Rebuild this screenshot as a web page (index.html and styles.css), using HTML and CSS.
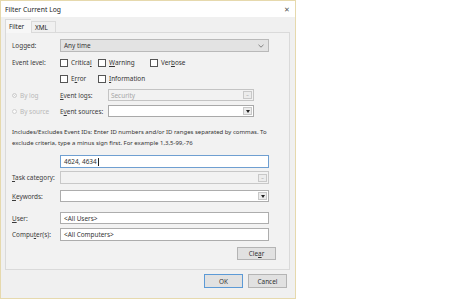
FILE: index.html
```html
<!DOCTYPE html>
<html lang="en">
<head>
    <meta charset="UTF-8">
    <meta name="viewport" content="width=device-width, initial-scale=1.0">
    <title>Filter Current Log</title>
    <link rel="stylesheet" href="styles.css">
</head>
<body>
    <div class="dialog">
        <div class="titlebar">
            <span class="title">Filter Current Log</span>
            <span class="close-btn">&#x2715;</span>
        </div>

        <div class="tabs">
            <span class="tab active">Filter</span>
            <span class="tab">XML</span>
        </div>

        <div class="panel">
            <div class="row row-logged">
                <span class="lbl">Logged:</span>
                <div class="select">
                    <span>Any time</span>
                    <svg class="chevron" width="6" height="4" viewBox="0 0 6 4"><path d="M0.5 0.8 L3 3.2 L5.5 0.8" fill="none" stroke="#777" stroke-width="0.9"/></svg>
                </div>
            </div>

            <div class="row row-level">
                <span class="lbl">Event level:</span>
                <div class="checks">
                    <span class="check"><i class="box"></i>Critica<u>l</u></span>
                    <span class="check"><i class="box"></i><u>W</u>arning</span>
                    <span class="check"><i class="box"></i>Ver<u>b</u>ose</span>
                    <span class="check"><i class="box"></i>E<u>r</u>ror</span>
                    <span class="check"><i class="box"></i><u>I</u>nformation</span>
                </div>
            </div>

            <div class="row row-logs">
                <span class="radio"><i class="dot checked"></i>By log</span>
                <span class="lbl2"><u>E</u>vent logs:</span>
                <div class="combo disabled">
                    <span>Security</span>
                    <span class="drop grey">&#x2013;</span>
                </div>
            </div>

            <div class="row row-sources">
                <span class="radio"><i class="dot"></i>By source</span>
                <span class="lbl2">E<u>v</u>ent sources:</span>
                <div class="combo">
                    <span></span>
                    <span class="drop"><i class="tri"></i></span>
                </div>
            </div>

            <p class="hint">Includes/Excludes Event IDs: Enter ID numbers and/or ID ranges separated by commas. To exclude criteria, type a minus sign first. For example 1,3,5-99,-76</p>

            <div class="row row-ids">
                <span class="lbl"></span>
                <div class="field active">4624, 4634<i class="caret"></i></div>
            </div>

            <div class="row row-task">
                <span class="lbl"><u>T</u>ask category:</span>
                <div class="field disabled">
                    <span></span>
                    <span class="drop grey small">&#x2013;</span>
                </div>
            </div>

            <div class="row row-keys">
                <span class="lbl"><u>K</u>eywords:</span>
                <div class="field">
                    <span></span>
                    <span class="drop"><i class="tri"></i></span>
                </div>
            </div>

            <div class="row row-user">
                <span class="lbl"><u>U</u>ser:</span>
                <div class="field">&lt;All Users&gt;</div>
            </div>

            <div class="row row-comp">
                <span class="lbl">Compu<u>t</u>er(s):</span>
                <div class="field">&lt;All Computers&gt;</div>
            </div>

            <div class="row row-clear">
                <button class="btn">Cle<u>a</u>r</button>
            </div>
        </div>

        <div class="footer">
            <button class="btn btn-default">OK</button>
            <button class="btn">Cancel</button>
        </div>
    </div>
</body>
</html>
```

FILE: styles.css
```css
* {
    box-sizing: border-box;
}

body {
    margin: 0;
    background-color: #fff;
    font-family: "Noto Sans", "Open Sans", sans-serif;
    font-size: 6.4px;
    color: #3a3a3a;
}

u {
    text-decoration-thickness: 0.5px;
    text-underline-offset: 1px;
}

.dialog {
    width: 296px;
    height: 299px;
    background-color: #f0f0f0;
    border: 1px solid #e6d9ad;
    display: flex;
    flex-direction: column;
}

.titlebar {
    height: 16px;
    background-color: #fff;
    display: flex;
    align-items: center;
    justify-content: space-between;
    padding: 0 5px 0 4px;
    color: #222;
    font-size: 6.8px;
}

.close-btn {
    font-size: 7px;
    color: #555;
}

/* Tabs */
.tabs {
    height: 14px;
    margin-top: 1px;
    padding-left: 4px;
    display: flex;
    align-items: flex-end;
}

.tab {
    height: 11px;
    width: 25px;
    padding-left: 3px;
    display: flex;
    align-items: center;
    border: 1px solid #dadada;
    border-bottom: none;
    background-color: #f0f0f0;
    color: #222;
}

.tab.active {
    position: relative;
    height: 14px;
    width: 26px;
    margin-bottom: -1px;
    background-color: #f7f7f7;
    border-right: none;
}

.panel {
    margin: 0 5px 0 4px;
    height: 238px;
    border: 1px solid #dadada;
    background-color: #f2f2f2;
    padding: 0 0 0 6px;
}

.row {
    display: flex;
    align-items: center;
}

.lbl {
    width: 48px;
    flex-shrink: 0;
}

.row-logged {
    margin-top: 6px;
    height: 13px;
}

.select {
    width: 209px;
    height: 13px;
    border: 1px solid #b9b9b9;
    background-color: #e3e3e3;
    display: flex;
    align-items: center;
    justify-content: space-between;
    padding: 0 4px 0 3px;
    color: #333;
}

/* Event level */
.row-level {
    margin-top: 5px;
    align-items: flex-start;
}

.row-level .lbl {
    line-height: 11px;
}

.checks {
    display: grid;
    grid-template-columns: 38px 52px auto;
    row-gap: 5px;
}

.check {
    display: flex;
    align-items: center;
    height: 11px;
    color: #333;
}

.box {
    width: 8px;
    height: 8px;
    border: 1px solid #555;
    background-color: #fff;
    margin-right: 3px;
}

/* Log / source */
.row-logs {
    margin-top: 5px;
    height: 12px;
}

.row-sources {
    margin-top: 4px;
    height: 12px;
}

.radio {
    width: 48px;
    flex-shrink: 0;
    display: flex;
    align-items: center;
    color: #b8b8b8;
}

.dot {
    width: 5px;
    height: 5px;
    border-radius: 50%;
    border: 1px solid #d0d0d0;
    background-color: #fafafa;
    margin-right: 3px;
}

.dot.checked {
    background-color: #c8c8c8;
    box-shadow: inset 0 0 0 1px #fafafa;
}

.lbl2 {
    width: 48px;
    flex-shrink: 0;
}

.combo {
    width: 146px;
    height: 12px;
    border: 1px solid #a9a9a9;
    background-color: #fff;
    display: flex;
    align-items: center;
    justify-content: space-between;
    padding: 0 1px 0 2px;
}

.combo.disabled {
    border-color: #c4c4c4;
    background-color: #f2f2f2;
    color: #a5a5a5;
}

.drop {
    width: 9px;
    height: 8px;
    border: 1px solid #c8c8c8;
    background-color: #ececec;
    display: flex;
    align-items: center;
    justify-content: center;
    font-size: 5px;
    color: #999;
}

.tri {
    width: 0;
    height: 0;
    border-left: 2.5px solid transparent;
    border-right: 2.5px solid transparent;
    border-top: 3px solid #222;
}

.hint {
    margin: 10px 0 0 0;
    width: 262px;
    font-size: 6px;
    line-height: 11px;
    color: #333;
}

.field {
    width: 209px;
    height: 13px;
    border: 1px solid #adadad;
    background-color: #fff;
    display: flex;
    align-items: center;
    justify-content: space-between;
    padding: 0 1px 0 3px;
    color: #333;
}

.field.active {
    border-color: #6f9fd1;
    justify-content: flex-start;
}

.caret {
    width: 1px;
    height: 8px;
    background-color: #222;
    margin-left: 1px;
}

.field.disabled {
    border-color: #c8c8c8;
    background-color: #f2f2f2;
}

.row-ids {
    margin-top: 6px;
}

.row-task {
    margin-top: 3px;
}

.row-keys {
    margin-top: 6px;
}

.row-keys .field {
    height: 12px;
}

.row-user {
    margin-top: 10px;
}

.row-user .field {
    height: 12px;
}

.row-comp {
    margin-top: 4px;
}

.row-clear {
    margin-top: 6px;
    justify-content: flex-end;
    padding-right: 13px;
}

/* Buttons */
.btn {
    font-family: inherit;
    font-size: 6.4px;
    color: #333;
    width: 39px;
    height: 13px;
    padding: 0;
    border: 1px solid #b4b4b4;
    background-color: #e1e1e1;
}

.footer {
    display: flex;
    justify-content: flex-end;
    gap: 5px;
    padding: 4px 8px 0 0;
}

.footer .btn {
    height: 14px;
}

.btn-default {
    border-color: #5c9ad6;
}
```
